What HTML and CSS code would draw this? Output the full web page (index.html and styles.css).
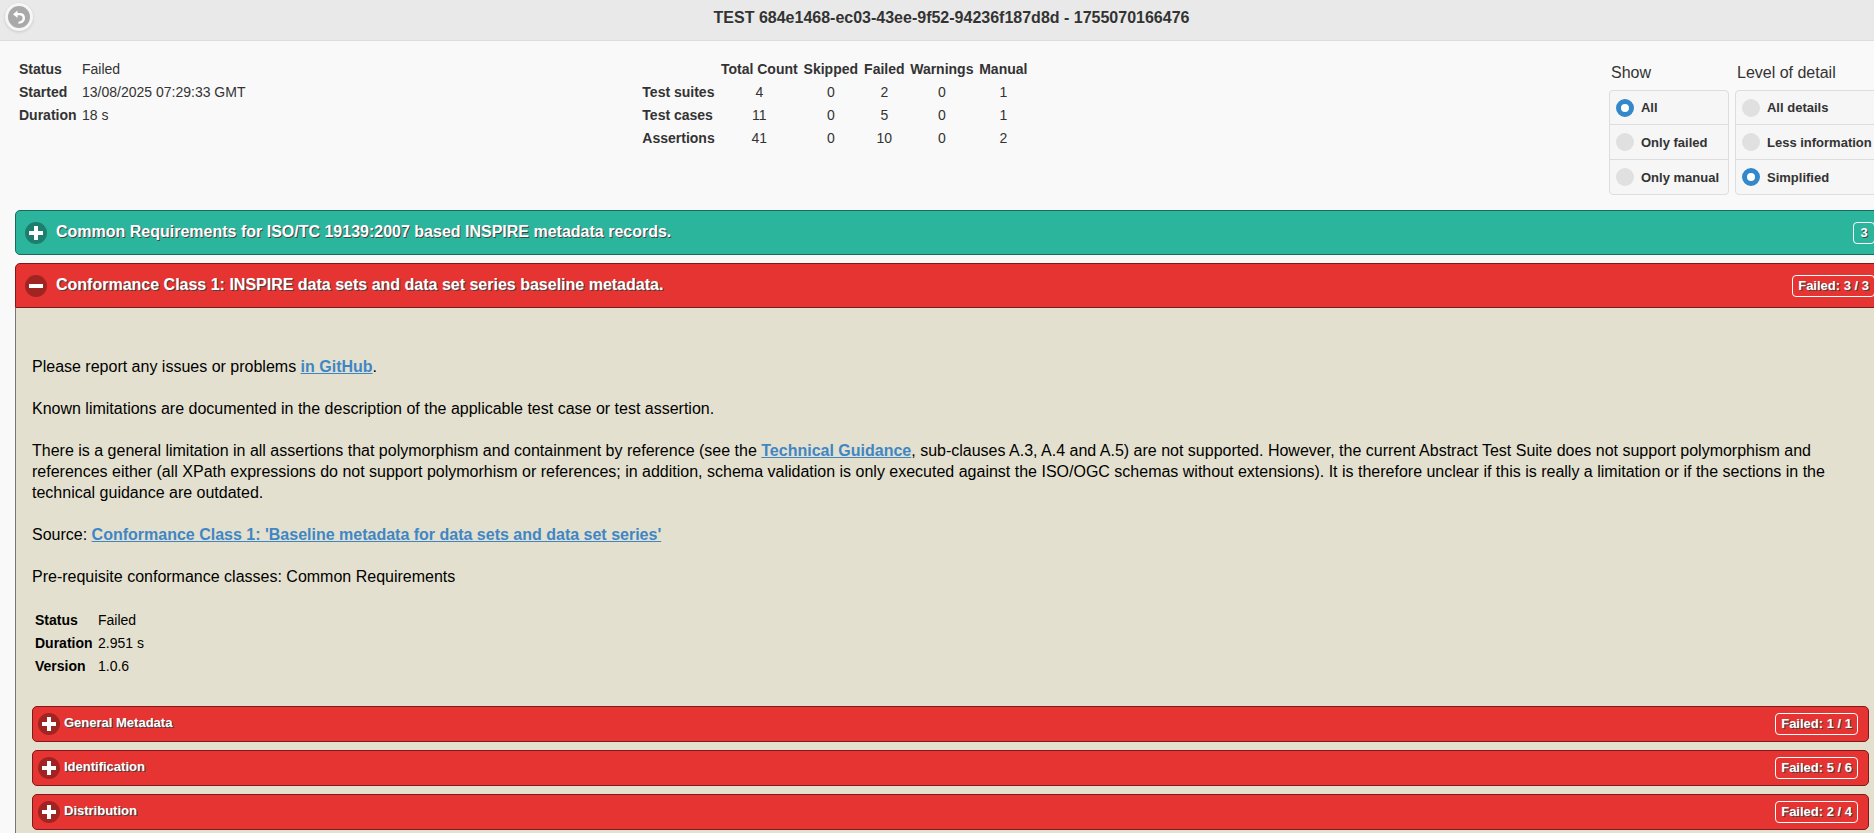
FILE: index.html
```html
<!DOCTYPE html>
<html lang="en">
<head>
<meta charset="utf-8">
<title>Test report</title>
<link rel="stylesheet" href="styles.css">
</head>
<body>
<svg class="defs" aria-hidden="true">
  <symbol id="plus" viewBox="0 0 22 22"><circle cx="11" cy="11" r="11" fill="#000" fill-opacity=".3"/><path d="M9 4h4v5h5v4h-5v5H9v-5H4V9h5z" fill="#fff"/></symbol>
  <symbol id="minus" viewBox="0 0 22 22"><circle cx="11" cy="11" r="11" fill="#000" fill-opacity=".3"/><path d="M4 9h14v4H4z" fill="#fff"/></symbol>
</svg>
<div class="page">
  <header class="header">
    <button class="back" type="button" aria-label="Back">
      <svg viewBox="0 0 22 22" width="22" height="22"><circle cx="11" cy="11" r="11" fill="#a9a9a9"/><path d="M5 8.300 9.500 4.600v2.500h2.500c3 0 5 1.800 5 4.900 0 3.300-2.200 5.300-6.500 5.900v-2.200c2.700-.5 4.100-1.700 4.100-3.500 0-1.900-1.100-2.900-3-2.900H9.500v2.600z" fill="#fff"/></svg>
    </button>
    <h1>TEST 684e1468-ec03-43ee-9f52-94236f187d8d - 1755070166476</h1>
  </header>
  <main class="content">
    <section class="summary">
      <div>
        <table class="info">
          <tr><th scope="row">Status</th><td>Failed</td></tr>
          <tr><th scope="row">Started</th><td>13/08/2025 07:29:33 GMT</td></tr>
          <tr><th scope="row">Duration</th><td>18 s</td></tr>
        </table>
      </div>
      <div>
        <table class="info counts">
          <colgroup><col class="c-label"><col class="c-total"><col class="c-skipped"><col class="c-failed"><col class="c-warnings"><col class="c-manual"></colgroup>
          <tr><td></td><th scope="col">Total Count</th><th scope="col">Skipped</th><th scope="col">Failed</th><th scope="col">Warnings</th><th scope="col">Manual</th></tr>
          <tr><th scope="row">Test suites</th><td>4</td><td>0</td><td>2</td><td>0</td><td>1</td></tr>
          <tr><th scope="row">Test cases</th><td>11</td><td>0</td><td>5</td><td>0</td><td>1</td></tr>
          <tr><th scope="row">Assertions</th><td>41</td><td>0</td><td>10</td><td>0</td><td>2</td></tr>
        </table>
      </div>
      <form class="filters">
        <fieldset class="show">
          <legend>Show</legend>
          <div class="options">
            <label><input type="radio" name="show" checked>All</label>
            <label><input type="radio" name="show">Only failed</label>
            <label><input type="radio" name="show">Only manual</label>
          </div>
        </fieldset>
        <fieldset class="detail">
          <legend>Level of detail</legend>
          <div class="options">
            <label><input type="radio" name="detail">All details</label>
            <label><input type="radio" name="detail">Less information</label>
            <label><input type="radio" name="detail" checked>Simplified</label>
          </div>
        </fieldset>
      </form>
    </section>

    <section class="suite">
      <h2><button class="bar passed" type="button" aria-expanded="false"><svg class="icon"><use href="#plus"/></svg><span class="name">Common Requirements for ISO/TC 19139:2007 based INSPIRE metadata records.</span><span class="badge">3</span></button></h2>
    </section>

    <section class="suite">
      <h2><button class="bar failed open" type="button" aria-expanded="true"><svg class="icon"><use href="#minus"/></svg><span class="name">Conformance Class 1: INSPIRE data sets and data set series baseline metadata.</span><span class="badge">Failed: 3 / 3</span></button></h2>
      <div class="body">
        <p>Please report any issues or problems <a href="#github">in GitHub</a>.</p>
        <p>Known limitations are documented in the description of the applicable test case or test assertion.</p>
        <p>There is a general limitation in all assertions that polymorphism and containment by reference (see the <a href="#guidance">Technical Guidance</a>, sub-clauses A.3, A.4 and A.5) are not supported. However, the current Abstract Test Suite does not support polymorphism and references either (all XPath expressions do not support polymorhism or references; in addition, schema validation is only executed against the ISO/OGC schemas without extensions). It is therefore unclear if this is really a limitation or if the sections in the technical guidance are outdated.</p>
        <p>Source: <a href="#source">Conformance Class 1: 'Baseline metadata for data sets and data set series'</a></p>
        <p>Pre-requisite conformance classes: Common Requirements</p>
        <table class="info">
          <tr><th scope="row">Status</th><td>Failed</td></tr>
          <tr><th scope="row">Duration</th><td>2.951 s</td></tr>
          <tr><th scope="row">Version</th><td>1.0.6</td></tr>
        </table>
        <div class="cases">
          <h3><button class="bar mini failed" type="button" aria-expanded="false"><svg class="icon"><use href="#plus"/></svg><span class="name">General Metadata</span><span class="badge">Failed: 1 / 1</span></button></h3>
          <h3><button class="bar mini failed" type="button" aria-expanded="false"><svg class="icon"><use href="#plus"/></svg><span class="name">Identification</span><span class="badge">Failed: 5 / 6</span></button></h3>
          <h3><button class="bar mini failed" type="button" aria-expanded="false"><svg class="icon"><use href="#plus"/></svg><span class="name">Distribution</span><span class="badge">Failed: 2 / 4</span></button></h3>
        </div>
      </div>
    </section>
  </main>
</div>
</body>
</html>
```

FILE: styles.css
```css
* { box-sizing: border-box; }

html { overflow: hidden; }

body {
  margin: 0;
  background: #f9f9f9;
  color: #333;
  font-family: "Liberation Sans", Arial, sans-serif;
  font-size: 16px;
  line-height: 21px;
}

h1, h2, h3, p { margin: 0; font-size: inherit; }

.defs { display: none; }

/* The report runs past the right edge of the window. */
.page { margin-right: -27px; }

.header {
  position: relative;
  padding: 7px 0 12px 2px;
  background: #e9e9e9;
  border-bottom: 1px solid #ddd;
  text-align: center;
  text-shadow: 0 1px 0 #eee;
}

.back {
  position: absolute;
  top: 3px;
  left: 5px;
  display: flex;
  padding: 3px;
  border: 0;
  border-radius: 50%;
  background: #f6f6f6;
  box-shadow: 0 1px 3px rgba(0, 0, 0, .15);
}

.content { padding: 16px 15px; }

.summary {
  display: grid;
  grid-template-columns: repeat(3, 1fr);
  margin-bottom: 15px;
  padding-left: 1px;
}

.info {
  border-collapse: separate;
  border-spacing: 2px;
  font-size: 14px;
  line-height: 19px;
}

.info th, .info td { padding: 1px; text-align: left; }
.info th[scope="row"] { min-width: 61px; }
.counts th[scope="col"], .counts td { text-align: center; }
.counts th { white-space: nowrap; }
.c-label { width: 76px; }
.c-total { width: 80px; }
.c-skipped { width: 59px; }
.c-failed { width: 44px; }
.c-warnings { width: 67px; }
.c-manual { width: 52px; }

.filters { display: flex; justify-content: flex-end; gap: 6px; }

fieldset { margin: 0; padding: 4px 0 0; border: 0; min-width: 0; }
legend { float: left; width: 100%; padding: 1px 2px; }
.show { width: 120px; }
.detail { width: 151px; }

.options {
  clear: both;
  margin-top: 29px;
  border: 1px solid #ddd;
  border-radius: 4px;
  background: #f6f6f6;
}

.options label {
  display: flex;
  align-items: center;
  gap: 7px;
  height: 35px;
  padding: 0 6px;
  font-size: 13px;
  font-weight: bold;
  white-space: nowrap;
  text-shadow: 0 1px 0 #f3f3f3;
}

.options label:first-child { height: 33px; }
.options label + label { border-top: 1px solid #ddd; }

input[type="radio"] {
  appearance: none;
  flex: none;
  width: 18px;
  height: 18px;
  margin: 0;
  border-radius: 50%;
  background: #e0e0e0;
}

input[type="radio"]:checked { border: 5px solid #3388cc; background: #fff; }

.suite + .suite { margin-top: 8px; }

.bar {
  display: flex;
  align-items: center;
  width: 100%;
  padding: 11px 10px 10px 9px;
  border: 1px solid;
  border-radius: 5px;
  color: #fff;
  font: bold 16px/20px "Liberation Sans", Arial, sans-serif;
  text-align: left;
  text-shadow: 1px 1px 0 #444;
}

.passed { background: #2bb59c; border-color: #1b6a5c; }
.failed { background: #e53431; border-color: #7d1a1a; }
.open { border-radius: 5px 5px 0 0; }

.icon { flex: none; width: 22px; height: 22px; }
.name { flex: 1; margin-left: 9px; padding-bottom: 2px; }

.badge {
  min-width: 22px;
  padding: 0 5px;
  border: 1px solid #fff;
  border-radius: 4px;
  font-size: 13px;
  line-height: 20px;
  text-align: center;
}

.mini { padding: 6px 10px 6px 5px; font-size: 13px; }
.mini .name { margin-left: 4px; }

.body {
  padding: 48px 16px 16px;
  border: 1px solid #777;
  border-top: 0;
  border-radius: 0 0 5px 5px;
  background: #e4e0cf;
  color: #000;
}

.body p { margin-bottom: 21px; }
.body a { color: #3f86c4; font-weight: bold; }

.cases { display: grid; gap: 8px; margin-top: 27px; }
```
